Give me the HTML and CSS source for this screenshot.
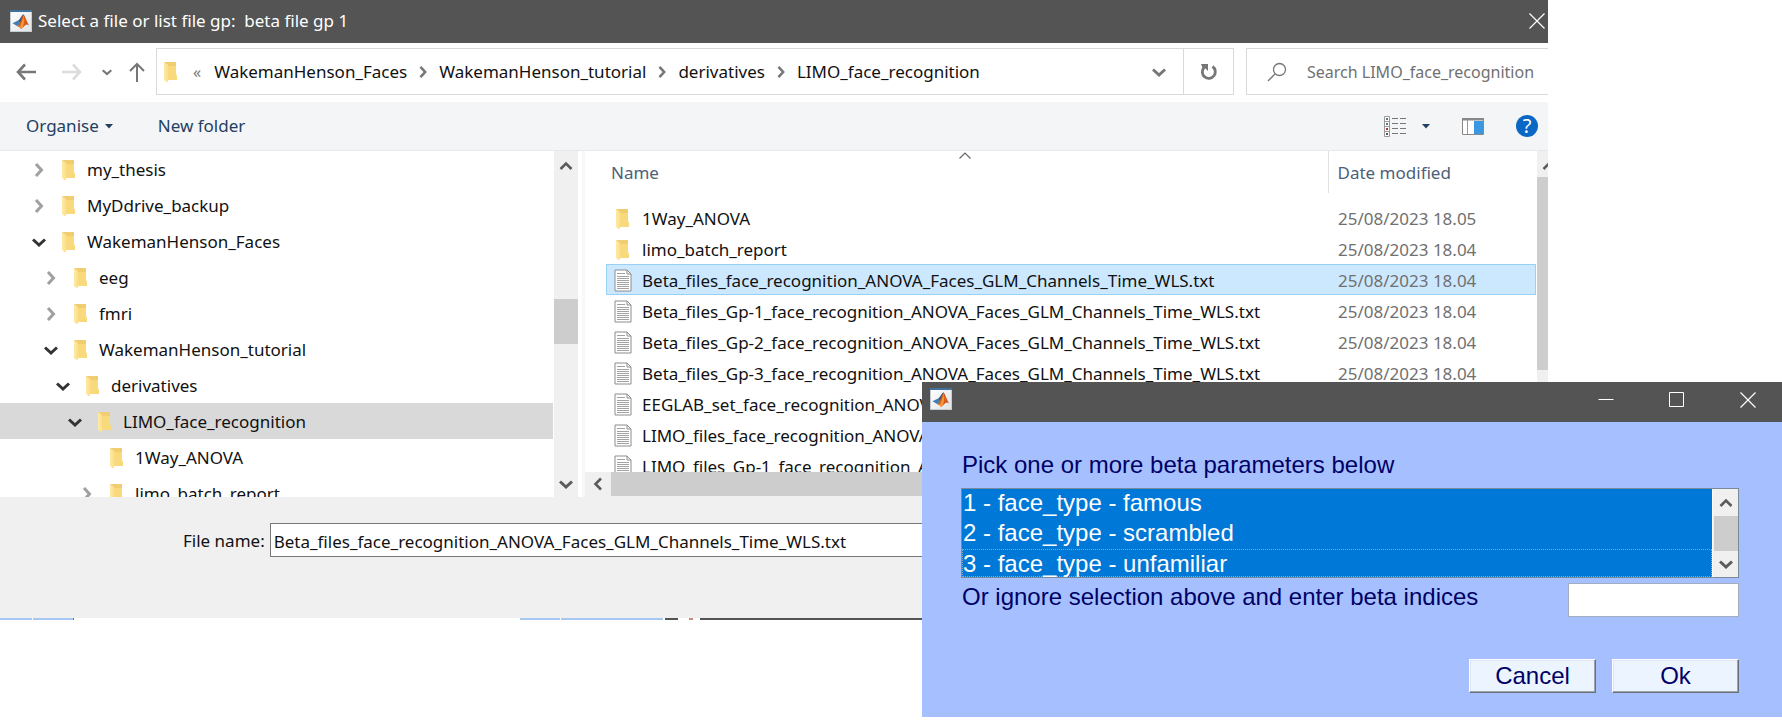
FILE: index.html
```html
<!DOCTYPE html>
<html lang="en">
<head>
<meta charset="utf-8">
<title>Select a file</title>
<link rel="stylesheet" href="styles.css">
</head>
<body>
<svg class="defs" aria-hidden="true">
  <linearGradient id="paper" x1="0" y1="0" x2="1" y2="1"><stop offset="0" stop-color="#fff"/><stop offset="1" stop-color="#dfe3e6"/></linearGradient>
  <linearGradient id="flame" x1="0" y1="0" x2="1" y2="1"><stop offset="0" stop-color="#8a2a10"/><stop offset=".5" stop-color="#e2661c"/><stop offset="1" stop-color="#b83a12"/></linearGradient>
  <linearGradient id="fold" x1="0" y1="0" x2="1" y2="0"><stop offset="0" stop-color="#ffe9a6"/><stop offset="1" stop-color="#fbdf8c"/></linearGradient>
  <symbol id="matlab" viewBox="0 0 22 22">
    <rect x=".5" y=".5" width="21" height="21" fill="url(#paper)" stroke="#c4ccd2"/>
    <rect width="22" height="2" fill="#3f719c"/>
    <path d="M2.500 13.200 8 10.500l2.500 2.500-3 3.200z" fill="#3f7fb8"/>
    <path d="M8 10.500c2-.5 3.500-5.500 5.500-6.300L10.500 13z" fill="#27557f"/>
    <path d="M7.500 16.200c2.500-2 4-9.500 6-12 2 1.800 3.500 8.500 6 11.600-1.600-1.300-2.800-1.800-4-.8-1.500 1-2.500 3-4.500 4-.8-1.300-2-2.500-3.500-2.800z" fill="url(#flame)"/>
    <path d="M13.500 4.200c-.6 3.500-1.500 8-3.500 13l1 2c2-1.500 2.500-4 3-7z" fill="#f39a3d"/>
  </symbol>
  <symbol id="folder" viewBox="0 0 15 22">
    <path d="M1 1h12v12l1 2v4H5z" fill="#f8d97c"/>
    <path d="M1 1h12v4H5z" fill="#f0cd70"/>
    <path d="M1 1l4 3v16l-1 1.500L1 19z" fill="url(#fold)"/>
  </symbol>
  <symbol id="text-file" viewBox="0 0 18 23">
    <path d="M1 1h12l4 4v17H1z" fill="#fff" stroke="#8c8c8c"/>
    <path d="M13 1v4h4" fill="none" stroke="#8c8c8c"/>
    <path d="M3 4.500h8M3 7.500h12M3 9.500h12M3 11.500h12M3 13.500h12M3 15.500h12M3 17.500h12M3 19.500h12" stroke="#a2a2a2"/>
  </symbol>
  <symbol id="right" viewBox="0 0 14 14"><path d="M4 1 9.500 7 4 13" fill="none" stroke="currentColor" stroke-width="3"/></symbol>
  <symbol id="down" viewBox="0 0 14 14"><path d="M1 4.500 7 10l6-5.500" fill="none" stroke="currentColor" stroke-width="3"/></symbol>
  <symbol id="up" viewBox="0 0 14 14"><path d="M1.500 10 7 4.500l5.500 5.500" fill="none" stroke="currentColor" stroke-width="2.600"/></symbol>
  <symbol id="left" viewBox="0 0 14 14"><path d="M10 1.500 4.500 7l5.500 5.500" fill="none" stroke="currentColor" stroke-width="2.600"/></symbol>
  <symbol id="cross" viewBox="0 0 16 16"><path d="M.5.5l15 15M15.500.5l-15 15" fill="none" stroke="currentColor" stroke-width="1.200"/></symbol>
  <symbol id="caret" viewBox="0 0 8 5"><path d="M0 0h8L4 4.500z" fill="currentColor"/></symbol>
</svg>

<main class="desktop">
<section class="chooser" aria-label="Select a file">
  <header class="titlebar">
    <svg class="app-icon"><use href="#matlab"/></svg>
    <h1 class="title">Select a file or list file gp:&nbsp; beta file gp 1</h1>
    <button class="plain close" aria-label="Close"><svg class="i16"><use href="#cross"/></svg></button>
  </header>

  <nav class="navbar" aria-label="Location">
    <div class="history">
      <button class="plain" aria-label="Back"><svg class="i20" viewBox="0 0 20 20"><path d="M20 10H2M9 2.500 2 10l7 7.500" fill="none" stroke="#777" stroke-width="2.600"/></svg></button>
      <button class="plain forward" aria-label="Forward"><svg class="i20" viewBox="0 0 20 20"><path d="M0 10h18M11 2.500l7 7.500-7 7.500" fill="none" stroke="#dcdcdc" stroke-width="2.600"/></svg></button>
      <button class="plain recent" aria-label="Recent locations"><svg class="i10"><use href="#down"/></svg></button>
      <button class="plain" aria-label="Up"><svg class="i20" viewBox="0 0 20 20"><path d="M10 20V2M3 9l7-7 7 7" fill="none" stroke="#777" stroke-width="2"/></svg></button>
    </div>
    <div class="address">
      <svg class="folder"><use href="#folder"/></svg>
      <span class="overflow">«</span>
      <a href="#">WakemanHenson_Faces</a><svg class="i12"><use href="#right"/></svg>
      <a href="#">WakemanHenson_tutorial</a><svg class="i12"><use href="#right"/></svg>
      <a href="#">derivatives</a><svg class="i12"><use href="#right"/></svg>
      <a href="#">LIMO_face_recognition</a>
      <button class="plain more" aria-label="Previous locations"><svg class="i14"><use href="#down"/></svg></button>
      <button class="plain refresh" aria-label="Refresh"><svg class="i18" viewBox="0 0 18 18"><path d="M12.500 3.500A6.500 6.500 0 1 1 4 4.500" fill="none" stroke="#777" stroke-width="2.800"/><path d="M1 1h7v7L5.500 5.500 3 6z" fill="#777"/></svg></button>
    </div>
    <label class="search">
      <svg class="i20" viewBox="0 0 20 20"><circle cx="12.500" cy="7.500" r="6" fill="none" stroke="#777" stroke-width="1.300"/><path d="M8 12l-7 7" stroke="#777" stroke-width="1.300"/></svg>
      <input type="text" aria-label="Search" placeholder="Search LIMO_face_recognition">
    </label>
  </nav>

  <div class="toolbar">
    <button class="plain organise">Organise <svg class="caret"><use href="#caret"/></svg></button>
    <button class="plain">New folder</button>
    <span class="fill"></span>
    <button class="plain view" aria-label="Change view">
      <svg class="list-icon" viewBox="0 0 22 21"><path d="M.5.500h5v20h-5zM.5 5.500h5M.5 10.500h5M.5 15.500h5" fill="#fff" stroke="#999"/><path d="M2 2h2v2H2zM2 7h2v2H2z" fill="#55806c"/><path d="M2 12h2v2H2z" fill="#a33"/><path d="M2 17h2v2H2z" fill="#555"/><path d="M8 2.500h6m2 0h6M8 7.500h6m2 0h6M8 12.500h6m2 0h6M8 17.500h6m2 0h6" stroke="#777"/></svg>
      <svg class="caret"><use href="#caret"/></svg>
    </button>
    <button class="plain pane" aria-label="Preview pane"><svg class="pane-icon" viewBox="0 0 22 17"><path d="M.5.500h21v16H.5z" fill="#fff" stroke="#888"/><path d="M0 0h22v2.500H0z" fill="#888"/><path d="M5.500 2v14" stroke="#999"/><path d="M12 3h9v13h-9z" fill="#3c97e3"/></svg></button>
    <button class="plain help" aria-label="Help">?</button>
  </div>

  <div class="panes">
    <ul class="tree">
      <li class="node level-1"><svg class="twist"><use href="#right"/></svg><svg class="folder"><use href="#folder"/></svg>my_thesis</li>
      <li class="node level-1"><svg class="twist"><use href="#right"/></svg><svg class="folder"><use href="#folder"/></svg>MyDdrive_backup</li>
      <li class="node level-1 open"><svg class="twist"><use href="#down"/></svg><svg class="folder"><use href="#folder"/></svg>WakemanHenson_Faces</li>
      <li class="node level-2"><svg class="twist"><use href="#right"/></svg><svg class="folder"><use href="#folder"/></svg>eeg</li>
      <li class="node level-2"><svg class="twist"><use href="#right"/></svg><svg class="folder"><use href="#folder"/></svg>fmri</li>
      <li class="node level-2 open"><svg class="twist"><use href="#down"/></svg><svg class="folder"><use href="#folder"/></svg>WakemanHenson_tutorial</li>
      <li class="node level-3 open"><svg class="twist"><use href="#down"/></svg><svg class="folder"><use href="#folder"/></svg>derivatives</li>
      <li class="node level-4 open current"><svg class="twist"><use href="#down"/></svg><svg class="folder"><use href="#folder"/></svg>LIMO_face_recognition</li>
      <li class="node level-5"><svg class="twist"></svg><svg class="folder"><use href="#folder"/></svg>1Way_ANOVA</li>
      <li class="node level-5"><svg class="twist"><use href="#right"/></svg><svg class="folder"><use href="#folder"/></svg>limo_batch_report</li>
    </ul>
    <div class="scroll tree-scroll">
      <svg class="i14"><use href="#up"/></svg>
      <span class="track"><span class="thumb"></span></span>
      <svg class="i14"><use href="#down"/></svg>
    </div>
    <div class="files">
      <div class="file-view">
        <table class="file-table">
          <thead><tr><th class="name">Name<svg class="sort" viewBox="0 0 12 7"><path d="M.5 6.500 6 1l5.500 5.500" fill="none" stroke="#666" stroke-width="1.200"/></svg></th><th class="date"><span>Date modified</span></th></tr></thead>
          <tbody>
            <tr><td><span class="file"><svg class="folder"><use href="#folder"/></svg>1Way_ANOVA</span></td><td>25/08/2023 18.05</td></tr>
            <tr><td><span class="file"><svg class="folder"><use href="#folder"/></svg>limo_batch_report</span></td><td>25/08/2023 18.04</td></tr>
            <tr class="selected"><td><span class="file"><svg class="doc"><use href="#text-file"/></svg>Beta_files_face_recognition_ANOVA_Faces_GLM_Channels_Time_WLS.txt</span></td><td>25/08/2023 18.04</td></tr>
            <tr><td><span class="file"><svg class="doc"><use href="#text-file"/></svg>Beta_files_Gp-1_face_recognition_ANOVA_Faces_GLM_Channels_Time_WLS.txt</span></td><td>25/08/2023 18.04</td></tr>
            <tr><td><span class="file"><svg class="doc"><use href="#text-file"/></svg>Beta_files_Gp-2_face_recognition_ANOVA_Faces_GLM_Channels_Time_WLS.txt</span></td><td>25/08/2023 18.04</td></tr>
            <tr><td><span class="file"><svg class="doc"><use href="#text-file"/></svg>Beta_files_Gp-3_face_recognition_ANOVA_Faces_GLM_Channels_Time_WLS.txt</span></td><td>25/08/2023 18.04</td></tr>
            <tr><td><span class="file"><svg class="doc"><use href="#text-file"/></svg>EEGLAB_set_face_recognition_ANOVA</span></td><td></td></tr>
            <tr><td><span class="file"><svg class="doc"><use href="#text-file"/></svg>LIMO_files_face_recognition_ANOVA</span></td><td></td></tr>
            <tr><td><span class="file"><svg class="doc"><use href="#text-file"/></svg>LIMO_files_Gp-1_face_recognition_A</span></td><td></td></tr>
          </tbody>
        </table>
        <div class="file-scroll"><svg class="half-up"><use href="#up"/></svg><span class="thumb"></span></div>
      </div>
      <div class="hscroll"><svg class="i14"><use href="#left"/></svg><span class="thumb"></span></div>
    </div>
  </div>

  <div class="footer">
    <label for="filename">File name:</label>
    <input id="filename" type="text" value="Beta_files_face_recognition_ANOVA_Faces_GLM_Channels_Time_WLS.txt">
  </div>
</section>
<div class="strip"><i class="blue a"></i><i class="blue b"></i><i class="gap"></i><i class="blue c"></i><i class="blue d"></i><i class="dark e"></i><i class="red"></i><i class="dark f"></i></div>

<section class="picker" aria-label="Beta parameters">
  <header class="picker-bar">
    <svg class="app-icon"><use href="#matlab"/></svg>
    <span class="fill"></span>
    <button class="plain" aria-label="Minimise"><svg class="i16" viewBox="0 0 16 16"><path d="M.5 7.500h15" stroke="#fff"/></svg></button>
    <button class="plain" aria-label="Maximise"><svg class="i16" viewBox="0 0 16 16"><path d="M.5.500h14v14H.5z" fill="none" stroke="#fff"/></svg></button>
    <button class="plain" aria-label="Close"><svg class="i16"><use href="#cross"/></svg></button>
  </header>
  <form class="picker-body">
    <label class="prompt" for="params">Pick one or more beta parameters below</label>
    <div class="listbox">
      <select id="params" multiple size="3">
        <option selected>1 - face_type - famous</option>
        <option selected>2 - face_type - scrambled</option>
        <option selected class="focused">3 - face_type - unfamiliar</option>
      </select>
      <div class="scroll list-scroll">
        <svg class="i14"><use href="#up"/></svg>
        <span class="thumb"></span>
        <svg class="i14"><use href="#down"/></svg>
      </div>
    </div>
    <div class="indices">
      <label for="indices">Or ignore selection above and enter beta indices</label>
      <input id="indices" type="text">
    </div>
    <div class="actions"><button type="button">Cancel</button><button type="button">Ok</button></div>
  </form>
</section>
</main>
</body>
</html>
```
FILE: styles.css
```css
* { box-sizing: border-box; }
body { margin: 0; background: #fff; font: 17px/24px "Noto Sans", sans-serif; color: #111; }
svg { display: block; flex: none; }
button, input, select { font: inherit; color: inherit; }
.defs { position: absolute; width: 0; height: 0; }
.plain { display: flex; align-items: center; padding: 0; border: 0; background: none; white-space: nowrap; }
.fill { flex: 1; }
.i10 { width: 10px; height: 10px; }
.i12 { width: 12px; height: 12px; }
.i14 { width: 14px; height: 14px; }
.i16 { width: 16px; height: 16px; }
.i18 { width: 18px; height: 18px; }
.i20 { width: 20px; height: 20px; }
.app-icon { width: 22px; height: 22px; }
.folder { width: 15px; height: 22px; }
.caret { width: 8px; height: 5px; }

.desktop { position: relative; min-height: 100vh; overflow: hidden; }
.chooser { width: 86.870%; background: #fff; overflow: hidden; }

.titlebar { display: flex; align-items: center; height: 43px; padding: 0 3px 2px 10px; background: #545454; color: #fff; }
.title { flex: 1; margin: 0 0 0 6px; font-size: 17px; font-weight: 400; white-space: nowrap; }

.navbar { display: flex; height: 59px; padding: 5px 0 7px; }
.history { display: flex; align-items: center; width: 156px; padding-left: 16px; color: #777; }
.forward { margin-left: 26px; }
.recent { margin: 0 15px 0 20px; }
.address { display: flex; flex: 1; align-items: center; min-width: 0; padding-left: 6px; border: 1px solid #d9d9d9; color: #777; }
.address a { margin: 0 10px; color: #111; text-decoration: none; white-space: nowrap; }
.overflow { margin: 0 3px 0 15px; font-size: 16px; }
.more { margin-left: auto; margin-right: 17px; }
.refresh { align-self: stretch; justify-content: center; width: 50px; border-left: 1px solid #d9d9d9; }
.search { display: flex; align-items: center; width: 302px; margin-left: 12px; padding-left: 20px; border: 1px solid #d9d9d9; border-right: 0; }
.search input { flex: 1; min-width: 0; margin-left: 20px; padding: 0; border: 0; outline: 0; background: none; font-size: 16px; }
.search input::placeholder { color: #717171; opacity: 1; }

.toolbar { display: flex; align-items: center; height: 49px; padding: 0 10px 0 26px; border-bottom: 1px solid #e6e8ea; background: #f4f5f7; color: #24405f; }
.organise { gap: 6px; margin-right: 45px; }
.view { gap: 16px; }
.list-icon { width: 22px; height: 21px; }
.pane { margin: 0 32px; }
.pane-icon { width: 22px; height: 17px; }
.help { justify-content: center; width: 22px; height: 22px; border-radius: 50%; background: #0b67c4; color: #fff; font-size: 20px; }

.panes { display: flex; height: 346px; overflow: hidden; }
.tree { width: 554px; margin: 0; padding: 0; list-style: none; }
.node { display: flex; align-items: center; height: 36px; margin-right: 1px; padding-top: 2px; white-space: nowrap; }
.twist { width: 14px; height: 14px; margin-right: 15px; color: #a0a0a0; }
.node .folder { margin-right: 11px; }
.open .twist { color: #333; }
.current { background: #d9d9d9; }
.level-1 { padding-left: 32px; }
.level-2 { padding-left: 44px; }
.level-3 { padding-left: 56px; }
.level-4 { padding-left: 68px; }
.level-5 { padding-left: 80px; }

.scroll { display: flex; flex-direction: column; align-items: center; background: #f0f0f0; color: #5b5b5b; }
.thumb { display: block; background: #cdcdcd; }
.tree-scroll { width: 24px; padding: 8px 0 6px; }
.track { flex: 1; width: 100%; padding-top: 126px; }
.track .thumb { height: 45px; }

.files { display: flex; flex: 1; flex-direction: column; min-width: 0; margin-left: 4px; border-left: 3px solid #f8f8f8; }
.file-view { display: flex; flex: 1; min-height: 0; overflow: hidden; padding-left: 21px; }
.file-table { flex: 1; align-self: flex-start; border-collapse: collapse; table-layout: fixed; white-space: nowrap; }
.file-table th { position: relative; height: 42px; padding: 2px 0 0; color: #4c607a; font-weight: 400; text-align: left; }
.file-table .name { padding-left: 5px; }
.file-table .date { width: 208px; border-left: 1px solid #e2e2e2; padding-left: 9px; }
.sort { position: absolute; top: 1px; left: 50%; width: 12px; height: 7px; margin-left: -8px; }
.file-table tbody::before { content: ""; display: block; height: 9px; }
.file-table td { height: 31px; padding: 2px 0 0; }
.file-table td + td { padding-left: 10px; color: #707070; }
.file { display: flex; align-items: center; padding-left: 9px; }
.file .folder { margin-right: 12px; }
.file .doc { width: 18px; height: 23px; margin: 0 10px 0 -1px; }
.selected { background: #cce8ff; box-shadow: inset 0 0 0 1px #99d1f5; }
.file-scroll { width: 11px; margin-left: 1px; overflow: hidden; background: #f0f0f0; color: #5b5b5b; }
.half-up { width: 14px; height: 14px; margin: 8px 0 4px 5px; }
.file-scroll .thumb { height: 193px; }
.hscroll { display: flex; height: 25px; padding-left: 6px; background: #f0f0f0; color: #5b5b5b; }
.hscroll .i14 { margin-top: 5px; }
.hscroll .thumb { flex: 1; height: 24px; margin-left: 6px; }

.footer { display: flex; align-items: flex-start; height: 121px; padding: 26px 20px 0 183px; background: #f0f0f0; }
.footer label { padding-top: 6px; white-space: nowrap; }
.footer input { flex: 1; min-width: 0; height: 34px; margin-left: 5px; padding: 2px 3px 0; border: 1px solid #777; background: #fff; }

.strip { display: flex; height: 2px; }
.blue { background: #a8c8f4; }
.dark { background: #545454; }
.red { width: 4px; margin-left: 11px; background: #c98a78; }
.a { width: 32px; }
.b { width: 41px; margin-left: 1px; border-right: 1px solid #777; }
.gap { width: 446px; }
.c { width: 40px; }
.d { width: 102px; margin-left: 1px; }
.e { width: 13px; margin-left: 2px; }
.f { width: 300px; margin-left: 7px; }

.picker { position: absolute; right: 0; bottom: 5px; width: 860px; background: #a6c0ff; color: #000066; font: 24px/30px "Liberation Sans", Arial, sans-serif; }
.picker-bar { display: flex; gap: 55px; align-items: flex-start; height: 40px; padding: 6px 26px 0 8px; background: #545454; color: #fff; }
.picker-bar .plain { margin-top: 4px; }
.picker-body { padding: 28px 43px 24px 39px; }
.prompt { display: block; padding-left: 1px; }
.listbox { display: flex; height: 90px; margin-top: 8px; border: 1px solid #7a8a9a; background: #fff; }
.listbox select { flex: 1; min-width: 0; height: 88px; padding: 0; border: 0; outline: 0; overflow: hidden; background: #0078d7; border-radius: 0; }
.listbox option { height: 30px; min-height: 0; padding: 0 1px; color: #fff; background: #0078d7 linear-gradient(#0078d7, #0078d7); }
.listbox option:checked { color: #fff; }
.listbox .focused { height: 28px; line-height: 27px; border: 1px dotted #8ab; padding: 0; }
.list-scroll { width: 26px; border-left: 1px solid #fff; padding: 7px 0 6px; justify-content: space-between; }
.list-scroll .thumb { width: 24px; height: 35px; }
.indices { display: flex; justify-content: space-between; margin-top: 5px; padding-left: 1px; white-space: nowrap; }
.indices label { margin-top: -1px; }
.indices input { width: 171px; height: 34px; padding: 0 4px; border: 1px solid #a5adc0; background: #fff; }
.actions { display: flex; justify-content: flex-end; gap: 16px; margin-top: 42px; }
.actions button { width: 127px; height: 34px; padding: 0; border: 1px solid; border-color: #fff #6b6f77 #6b6f77 #fff; background: #ecf4ff; box-shadow: inset -1px -1px #9da3ad, inset 1px 1px #dfe5ee; }
```
